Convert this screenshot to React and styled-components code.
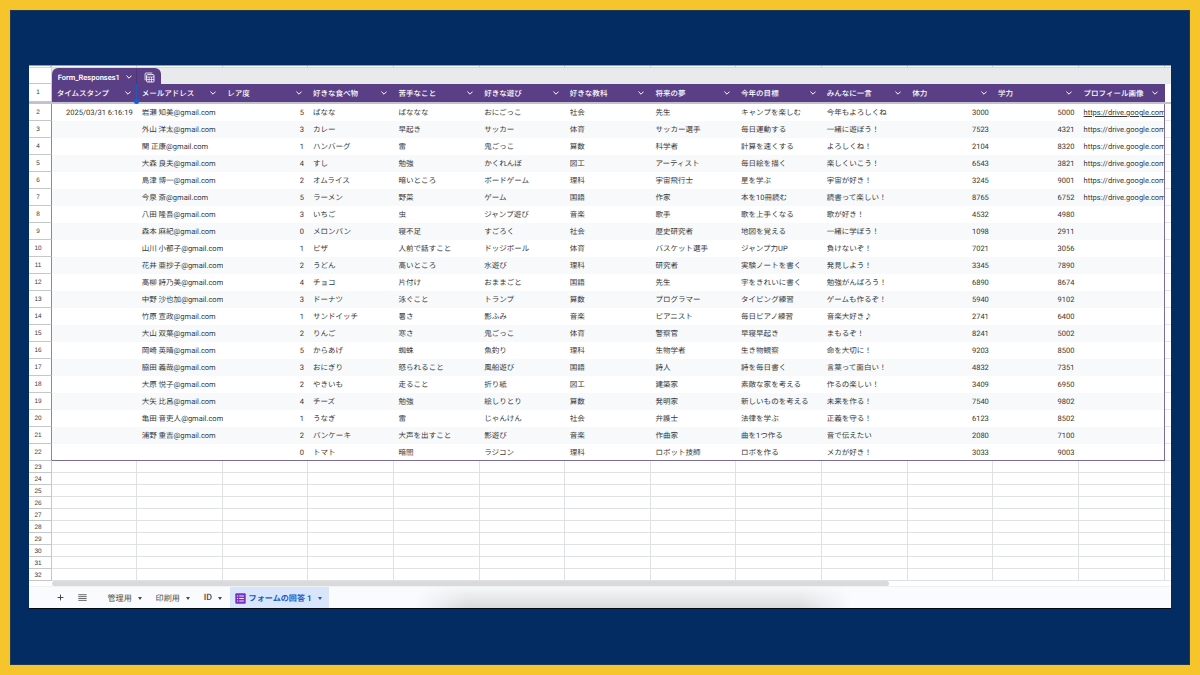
import React from "react";
import styled, { createGlobalStyle, css } from "styled-components";

const columns = [
  "タイムスタンプ",
  "メールアドレス",
  "レア度",
  "好きな食べ物",
  "苦手なこと",
  "好きな遊び",
  "好きな教科",
  "将来の夢",
  "今年の目標",
  "みんなに一言",
  "体力",
  "学力",
  "プロフィール画像",
];

// 右寄せの列 (日時・数値)
const rightAligned = [0, 2, 10, 11];

const DRIVE = "https://drive.google.com";

const responses = [
  ["2025/03/31 6:16:19", "岩瀬 知美@gmail.com", "5", "ばなな", "ばななな", "おにごっこ", "社会", "先生", "キャンプを楽しむ", "今年もよろしくね", "3000", "5000", DRIVE],
  ["", "外山 洋太@gmail.com", "3", "カレー", "早起き", "サッカー", "体育", "サッカー選手", "毎日運動する", "一緒に遊ぼう！", "7523", "4321", DRIVE],
  ["", "関 正康@gmail.com", "1", "ハンバーグ", "雷", "鬼ごっこ", "算数", "科学者", "計算を速くする", "よろしくね！", "2104", "8320", DRIVE],
  ["", "大森 良夫@gmail.com", "4", "すし", "勉強", "かくれんぼ", "図工", "アーティスト", "毎日絵を描く", "楽しくいこう！", "6543", "3821", DRIVE],
  ["", "島津 博一@gmail.com", "2", "オムライス", "暗いところ", "ボードゲーム", "理科", "宇宙飛行士", "星を学ぶ", "宇宙が好き！", "3245", "9001", DRIVE],
  ["", "今泉 斎@gmail.com", "5", "ラーメン", "野菜", "ゲーム", "国語", "作家", "本を10冊読む", "読書って楽しい！", "8765", "6752", DRIVE],
  ["", "八田 隆吾@gmail.com", "3", "いちご", "虫", "ジャンプ遊び", "音楽", "歌手", "歌を上手くなる", "歌が好き！", "4532", "4980", ""],
  ["", "森本 麻紀@gmail.com", "0", "メロンパン", "寝不足", "すごろく", "社会", "歴史研究者", "地図を覚える", "一緒に学ぼう！", "1098", "2911", ""],
  ["", "山川 小都子@gmail.com", "1", "ピザ", "人前で話すこと", "ドッジボール", "体育", "バスケット選手", "ジャンプ力UP", "負けないぞ！", "7021", "3056", ""],
  ["", "花井 亜抄子@gmail.com", "2", "うどん", "高いところ", "水遊び", "理科", "研究者", "実験ノートを書く", "発見しよう！", "3345", "7890", ""],
  ["", "高柳 詩乃美@gmail.com", "4", "チョコ", "片付け", "おままごと", "国語", "先生", "字をきれいに書く", "勉強がんばろう！", "6890", "8674", ""],
  ["", "中野 沙也加@gmail.com", "3", "ドーナツ", "泳ぐこと", "トランプ", "算数", "プログラマー", "タイピング練習", "ゲームも作るぞ！", "5940", "9102", ""],
  ["", "竹原 宣政@gmail.com", "1", "サンドイッチ", "暑さ", "影ふみ", "音楽", "ピアニスト", "毎日ピアノ練習", "音楽大好き♪", "2741", "6400", ""],
  ["", "大山 双葉@gmail.com", "2", "りんご", "寒さ", "鬼ごっこ", "体育", "警察官", "早寝早起き", "まもるぞ！", "8241", "5002", ""],
  ["", "岡崎 英晴@gmail.com", "5", "からあげ", "蜘蛛", "魚釣り", "理科", "生物学者", "生き物観察", "命を大切に！", "9203", "8500", ""],
  ["", "脇田 義哉@gmail.com", "3", "おにぎり", "怒られること", "風船遊び", "国語", "詩人", "詩を毎日書く", "言葉って面白い！", "4832", "7351", ""],
  ["", "大原 悦子@gmail.com", "2", "やきいも", "走ること", "折り紙", "図工", "建築家", "素敵な家を考える", "作るの楽しい！", "3409", "6950", ""],
  ["", "大矢 比呂@gmail.com", "4", "チーズ", "勉強", "絵しりとり", "算数", "発明家", "新しいものを考える", "未来を作る！", "7540", "9802", ""],
  ["", "亀田 音吏人@gmail.com", "1", "うなぎ", "雷", "じゃんけん", "社会", "弁護士", "法律を学ぶ", "正義を守る！", "6123", "8502", ""],
  ["", "浦野 重吉@gmail.com", "2", "パンケーキ", "大声を出すこと", "影遊び", "音楽", "作曲家", "曲を1つ作る", "音で伝えたい", "2080", "7100", ""],
  ["", "", "0", "トマト", "暗闇", "ラジコン", "理科", "ロボット技師", "ロボを作る", "メカが好き！", "3033", "9003", ""],
];

const emptyRows = [23, 24, 25, 26, 27, 28, 29, 30, 31, 32];

const sheets = ["管理用", "印刷用", "ID"];

function Chevron() {
  return (
    <ChevronSvg viewBox="0 0 6 4">
      <path d="M0.4 0.6 L3 3.2 L5.6 0.6" />
    </ChevronSvg>
  );
}

function TableIcon() {
  return (
    <svg width="11" height="11" viewBox="0 0 11 11" fill="none" stroke="#fff">
      <path d="M1.1 8.3V1.9a.9.9 0 0 1 .9-.9H8.3" strokeWidth="0.8" />
      <rect x="2.6" y="2.6" width="7.4" height="7.4" rx="0.9" strokeWidth="0.9" />
      <path d="M2.6 5H10M2.6 7.5H10M5.1 5V10M7.5 5V10" strokeWidth="0.7" />
    </svg>
  );
}

function FormIcon() {
  return (
    <svg width="11" height="11" viewBox="0 0 11 11">
      <rect x="0.3" y="0.3" width="10.4" height="10.4" rx="1" fill="#7b2fc4" />
      <path d="M4.3 3h4.6M4.3 5.5h4.6M4.3 8h4.6" stroke="#fff" strokeWidth="0.9" />
      <path d="M2.1 3h1.1M2.1 5.5h1.1M2.1 8h1.1" stroke="#fff" strokeWidth="1" />
    </svg>
  );
}

function App() {
  return (
    <Frame>
      <GlobalStyle />
      <Sheet>
        <LetterStrip>
          <StripCorner />
          {columns.map((name) => (
            <StripCell key={name} />
          ))}
        </LetterStrip>

        <TitleRow>
          <TitleNumber />
          <TableTab>
            <TabName>
              Form_Responses1
              <Chevron />
            </TabName>
            <TabIcon>
              <TableIcon />
            </TabIcon>
          </TableTab>
        </TitleRow>

        <HeaderRow>
          <RowNumber>1</RowNumber>
          {columns.map((name, i) => (
            <HeaderCell key={name} $selected={i === 0}>
              {name}
              <Chevron />
              {i === 0 && <FillHandle />}
            </HeaderCell>
          ))}
        </HeaderRow>
        <FrozenLine />

        {responses.map((row, r) => (
          <DataRow key={r}>
            <RowNumber $table>{r + 2}</RowNumber>
            {row.map((value, c) => (
              <DataCell
                key={c}
                $right={rightAligned.includes(c)}
                $band={r % 2 === 1}
                $edge={c === columns.length - 1}
                $last={r === responses.length - 1}
                $link={r === 0 && c === columns.length - 1}
              >
                {value}
              </DataCell>
            ))}
            <OuterCell />
          </DataRow>
        ))}

        {emptyRows.map((n) => (
          <EmptyRow key={n}>
            <RowNumber $short>{n}</RowNumber>
            {columns.map((name) => (
              <EmptyCell key={name} />
            ))}
            <OuterCell />
          </EmptyRow>
        ))}

        <ScrollArea>
          <ScrollThumb />
        </ScrollArea>

        <TabBar>
          <DockShadow />
          <ToolIcon $width={7} viewBox="0 0 7 7">
            <path d="M3.5 0.6V6.4M0.6 3.5H6.4" />
          </ToolIcon>
          <ToolIcon $width={9} viewBox="0 0 9 7">
            <path d="M0.3 0.7H8.7M0.3 2.6H8.7M0.3 4.5H8.7M0.3 6.4H8.7" strokeWidth="0.8" />
          </ToolIcon>
          <SheetTabs>
            {sheets.map((name) => (
              <SheetTab key={name} $latin={name === "ID"}>
                {name}
                <Caret />
              </SheetTab>
            ))}
          </SheetTabs>
          <ActiveTab>
            <FormIcon />
            <ActiveName>フォームの回答 1</ActiveName>
            <Caret />
          </ActiveTab>
        </TabBar>
      </Sheet>
    </Frame>
  );
}

export default App;

const GlobalStyle = createGlobalStyle`
  * {
    box-sizing: border-box;
  }

  body {
    margin: 0;
    font-family: Roboto, "Noto Sans CJK JP", sans-serif;
    text-rendering: geometricPrecision;
  }
`;

const rowGrid = css`
  display: grid;
  grid-template-columns: 23px 85px repeat(12, 85.63px) 1fr;
`;

const Frame = styled.div`
  width: 1200px;
  height: 675px;
  padding: 55px 19px 0;
  border: 10px solid #f6c52b;
  background: #032d62;
  box-shadow: inset 0 0 0 1px #1d3a5b;
  overflow: hidden;
`;

const Sheet = styled.div`
  display: flex;
  flex-direction: column;
  width: 1142px;
  height: 544px;
  background: #fff;
  border-top: 1px solid #8c9fb9;
  border-bottom: 1px solid #020a16;
  overflow: hidden;
`;

const LetterStrip = styled.div`
  ${rowGrid}
  height: 2px;
  background: #fbfcfd;
  border-bottom: 1px solid #d5d7de;
`;

const StripCorner = styled.div`
  border-right: 2px solid #b9bcc4;
`;

const StripCell = styled.div`
  border-right: 1px solid #c4c7cf;
`;

const TitleRow = styled.div`
  display: flex;
  height: 16px;
  background: #e8eaec;
`;

const TitleNumber = styled.div`
  width: 23px;
  background: #fff;
  border-right: 1px solid #d0d2d8;
  border-bottom: 1px solid #c5c7cb;
`;

const TableTab = styled.div`
  display: flex;
  width: 109px;
  color: #fff;
  background: #5b3f86;
  border-radius: 6px 6px 0 0;
`;

const TabName = styled.div`
  display: flex;
  align-items: center;
  justify-content: space-between;
  width: 85px;
  padding: 2px 4.5px 0 5.7px;
  font-size: 7.5px;
  font-weight: 600;
  border-right: 1px solid #4d3475;
`;

const TabIcon = styled.div`
  display: flex;
  flex: 1;
  align-items: center;
  justify-content: center;
  padding: 2px 0 0 1px;
`;

const ChevronSvg = styled.svg`
  width: 6px;
  height: 4px;
  flex-shrink: 0;
  fill: none;
  stroke: #fff;
  stroke-width: 1;
`;

const HeaderRow = styled.div`
  ${rowGrid}
  height: 18px;
`;

const RowNumber = styled.div`
  display: flex;
  align-items: center;
  justify-content: center;
  padding: ${(props) => (props.$short ? 1 : 0)}px 4px 0 0;
  font-family: "Liberation Sans", Arial, sans-serif;
  font-size: 6.4px;
  color: #3c4043;
  background: #fff;
  border-right: 1px solid ${(props) => (props.$table ? "#8f84a8" : "#c5c7cb")};
  border-bottom: 1px solid #c5c7cb;
`;

const HeaderCell = styled.div`
  position: relative;
  display: flex;
  align-items: center;
  justify-content: space-between;
  padding: 0 6.5px 0 4.7px;
  font-size: 7.53px;
  font-weight: 500;
  color: #fff;
  background: #5b3f86;
  white-space: nowrap;
  box-shadow: ${(props) => (props.$selected ? "inset -1px -1px #2458b8" : "none")};
`;

const FillHandle = styled.span`
  position: absolute;
  z-index: 1;
  right: -2px;
  bottom: -2px;
  width: 5px;
  height: 5px;
  border-radius: 50%;
  background: #1a5fd0;
`;

const FrozenLine = styled.div`
  height: 2px;
  background: #c3c1cb;
`;

const DataRow = styled.div`
  ${rowGrid}
  height: 17px;
`;

const DataCell = styled.div`
  padding: 0 ${(props) => (props.$edge ? 0 : 4.4)}px 0 4.7px;
  font-size: 7.53px;
  line-height: 17px;
  color: #37393c;
  text-align: ${(props) => (props.$right ? "right" : "left")};
  text-decoration: ${(props) => (props.$link ? "underline" : "none")};
  background: ${(props) => (props.$band ? "#f7f9fb" : "#fff")};
  border-right: ${(props) => (props.$edge ? "1px solid #7a6c9c" : "none")};
  border-bottom: ${(props) => (props.$last ? "1px solid #7a6c9c" : "none")};
  white-space: nowrap;
  overflow: hidden;
`;

const OuterCell = styled.div`
  border-bottom: 1px solid #e3e4e6;
`;

const EmptyRow = styled.div`
  ${rowGrid}
  height: 12px;
`;

const EmptyCell = styled.div`
  border-right: 1px solid #e0e1e4;
  border-bottom: 1px solid #e0e1e4;
`;

const ScrollArea = styled.div`
  height: 6px;
  padding: 0 0 0 23px;
  background: #fff;
  border-bottom: 1px solid #eff1f3;
`;

const ScrollThumb = styled.div`
  width: 837px;
  height: 5px;
  border-radius: 3px;
  background: #d9dadc;
`;

const TabBar = styled.div`
  position: relative;
  display: flex;
  flex: 1;
  align-items: center;
  padding-left: 28px;
  background: #f9fbfd;
`;

// 下端中央にかかる影
const DockShadow = styled.div`
  position: absolute;
  left: 386px;
  bottom: 0;
  width: 436px;
  height: 21px;
  background: linear-gradient(rgba(216, 216, 216, 0.1), #d9dbdb);
  mask-image: linear-gradient(90deg, transparent, #000 12%, #000 88%, transparent);
`;

const ToolIcon = styled.svg`
  width: ${(props) => props.$width}px;
  height: 7px;
  margin-right: 14px;
  fill: none;
  stroke: #444746;
`;

const SheetTabs = styled.div`
  display: flex;
  gap: 13.8px;
  padding-top: 1px;
  margin-left: 6.5px;
`;

const SheetTab = styled.div`
  display: flex;
  align-items: center;
  gap: 6px;
  font-size: ${(props) => (props.$latin ? 8.8 : 8.1)}px;
  font-weight: ${(props) => (props.$latin ? 500 : 400)};
  color: #4b4e51;
`;

const Caret = styled.span`
  border: 2.5px solid transparent;
  border-top: 3px solid currentColor;
  border-bottom: 0;
`;

const ActiveTab = styled.div`
  display: flex;
  align-items: center;
  align-self: stretch;
  width: 99px;
  margin-left: 7.7px;
  padding: 1px 0 0 5px;
  color: #1b5bc6;
  background: #d8e5fa;
`;

const ActiveName = styled.span`
  margin: 0 6px 0 3px;
  font-size: 8.1px;
  font-weight: 700;
  white-space: nowrap;
`;
